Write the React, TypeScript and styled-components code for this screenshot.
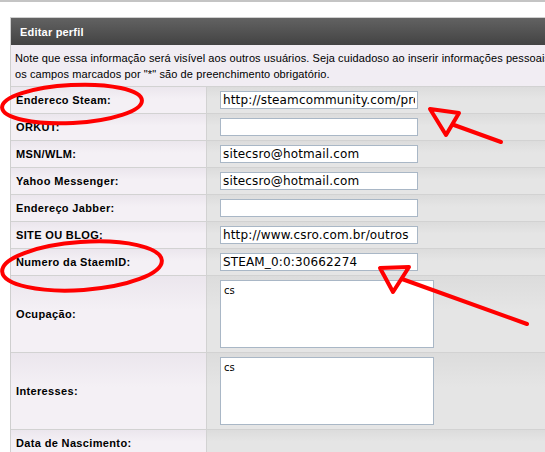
import React from "react";
import styled, { createGlobalStyle } from "styled-components";

// === PROFILE FORM PALETTE ===
const colors = {
  rule: "#c4c4c4",
  panelBorder: "#cfcfcf",
  headTop: "#626262",
  headBottom: "#434343",
  note: "#f1edf3",
  labelTop: "#ebe6ed",
  labelBottom: "#f4f0f5",
  fieldTop: "#dcdcdc",
  fieldBottom: "#e5e5e5",
  line: "#d2d2d2",
  inputBorder: "#a9b7c6",
  text: "#000000",
  mark: "#ff0000",
};

const GlobalStyle = createGlobalStyle`
  html, body {
    margin: 0;
    padding: 0;
    background: #ffffff;
    overflow: hidden;
  }
  body {
    font-family: "Liberation Sans", Arial, sans-serif;
    color: ${colors.text};
  }
`;

const Page = styled.div`
  position: relative;
  width: 545px;
  height: 452px;
  overflow: hidden;
  border-top: 2px solid ${colors.rule};
  box-sizing: border-box;
`;

const Panel = styled.div`
  margin: 15px 0 0 10px;
  width: 580px;
  border-left: 1px solid ${colors.panelBorder};
  border-top: 1px solid ${colors.panelBorder};
`;

const Header = styled.div`
  height: 27px;
  display: flex;
  align-items: center;
  padding-left: 9px;
  background: linear-gradient(180deg, ${colors.headTop}, ${colors.headBottom});
  color: #ffffff;
  font-size: 11px;
  font-weight: bold;
  letter-spacing: 0.2px;
`;

const Note = styled.div`
  background: ${colors.note};
  padding: 5px 5px 4px 4px;
  font-size: 11px;
  line-height: 16px;
  letter-spacing: 0.1px;
  white-space: nowrap;
  border-bottom: 1px solid ${colors.line};
`;

const Row = styled.div<{ $tall?: boolean }>`
  display: grid;
  grid-template-columns: 196px 1fr;
  height: ${(p) => (p.$tall ? 76 : 26)}px;
  border-bottom: 1px solid ${colors.line};
`;

const Label = styled.div`
  display: flex;
  align-items: center;
  padding-left: 5px;
  font-size: 11px;
  font-weight: bold;
  letter-spacing: 0.35px;
  border-right: 1px solid ${colors.line};
  background: linear-gradient(180deg, ${colors.labelTop} 0, ${colors.labelBottom} 45%, ${colors.labelBottom});
`;

const Field = styled.div<{ $tall?: boolean }>`
  display: flex;
  align-items: ${(p) => (p.$tall ? "flex-start" : "center")};
  padding: ${(p) => (p.$tall ? "4px 0 0 13px" : "0 0 0 13px")};
  background: linear-gradient(180deg, ${colors.fieldTop} 0, ${colors.fieldBottom} 45%, ${colors.fieldBottom});
`;

const TextInput = styled.input`
  box-sizing: border-box;
  width: 198px;
  height: 18px;
  margin: 0;
  padding: 0 2px;
  border: 1px solid ${colors.inputBorder};
  background: #ffffff;
  font-family: "DejaVu Sans", Verdana, sans-serif;
  font-size: 12px;
  letter-spacing: 0.15px;
  color: #000000;
  outline: none;
`;

const TextArea = styled.textarea`
  box-sizing: border-box;
  width: 214px;
  height: 68px;
  margin: 0;
  padding: 4px 3px;
  border: 1px solid ${colors.inputBorder};
  background: #ffffff;
  font-family: "DejaVu Sans", Verdana, sans-serif;
  font-size: 10px;
  resize: none;
  outline: none;
`;

const Marks = styled.svg`
  position: absolute;
  top: 0;
  left: 0;
  pointer-events: none;
`;

type FieldDef = { label: string; value?: string; area?: boolean };

const fields: FieldDef[] = [
  { label: "Endereco Steam:", value: "http://steamcommunity.com/profiles/" },
  { label: "ORKUT:", value: "" },
  { label: "MSN/WLM:", value: "sitecsro@hotmail.com" },
  { label: "Yahoo Messenger:", value: "sitecsro@hotmail.com" },
  { label: "Endereço Jabber:", value: "" },
  { label: "SITE OU BLOG:", value: "http://www.csro.com.br/outros" },
  { label: "Numero da StaemID:", value: "STEAM_0:0:30662274" },
  { label: "Ocupação:", value: "cs", area: true },
  { label: "Interesses:", value: "cs", area: true },
];

export default function App() {
  return (
    <>
      <GlobalStyle />
      <Page>
        <Panel>
          <Header>Editar perfil</Header>
          <Note>
            Note que essa informação será visível aos outros usuários. Seja cuidadoso ao inserir informações pessoais.
            <br />
            os campos marcados por "*" são de preenchimento obrigatório.
          </Note>
          {fields.map((f) => (
            <Row key={f.label} $tall={f.area}>
              <Label>{f.label}</Label>
              <Field $tall={f.area}>
                {f.area ? (
                  <TextArea defaultValue={f.value} />
                ) : (
                  <TextInput type="text" defaultValue={f.value} />
                )}
              </Field>
            </Row>
          ))}
          <Row>
            <Label>Data de Nascimento:</Label>
            <Field />
          </Row>
        </Panel>

        {/* hand-drawn red highlights */}
        <Marks width="545" height="452" viewBox="0 0 545 452">
          <g fill="none" stroke={colors.mark} strokeWidth="4" strokeLinejoin="round" strokeLinecap="round">
            <ellipse cx="72" cy="102" rx="70" ry="19" transform="rotate(-3 72 102)" />
            <ellipse cx="82" cy="264" rx="80" ry="24" transform="rotate(-4 82 264)" />
            <polygon points="430,107 459,111 446,133" />
            <line x1="454" y1="123" x2="501" y2="140" />
            <polygon points="380,266 409,265 393,290" />
            <line x1="402" y1="277" x2="527" y2="322" />
          </g>
        </Marks>
      </Page>
    </>
  );
}
